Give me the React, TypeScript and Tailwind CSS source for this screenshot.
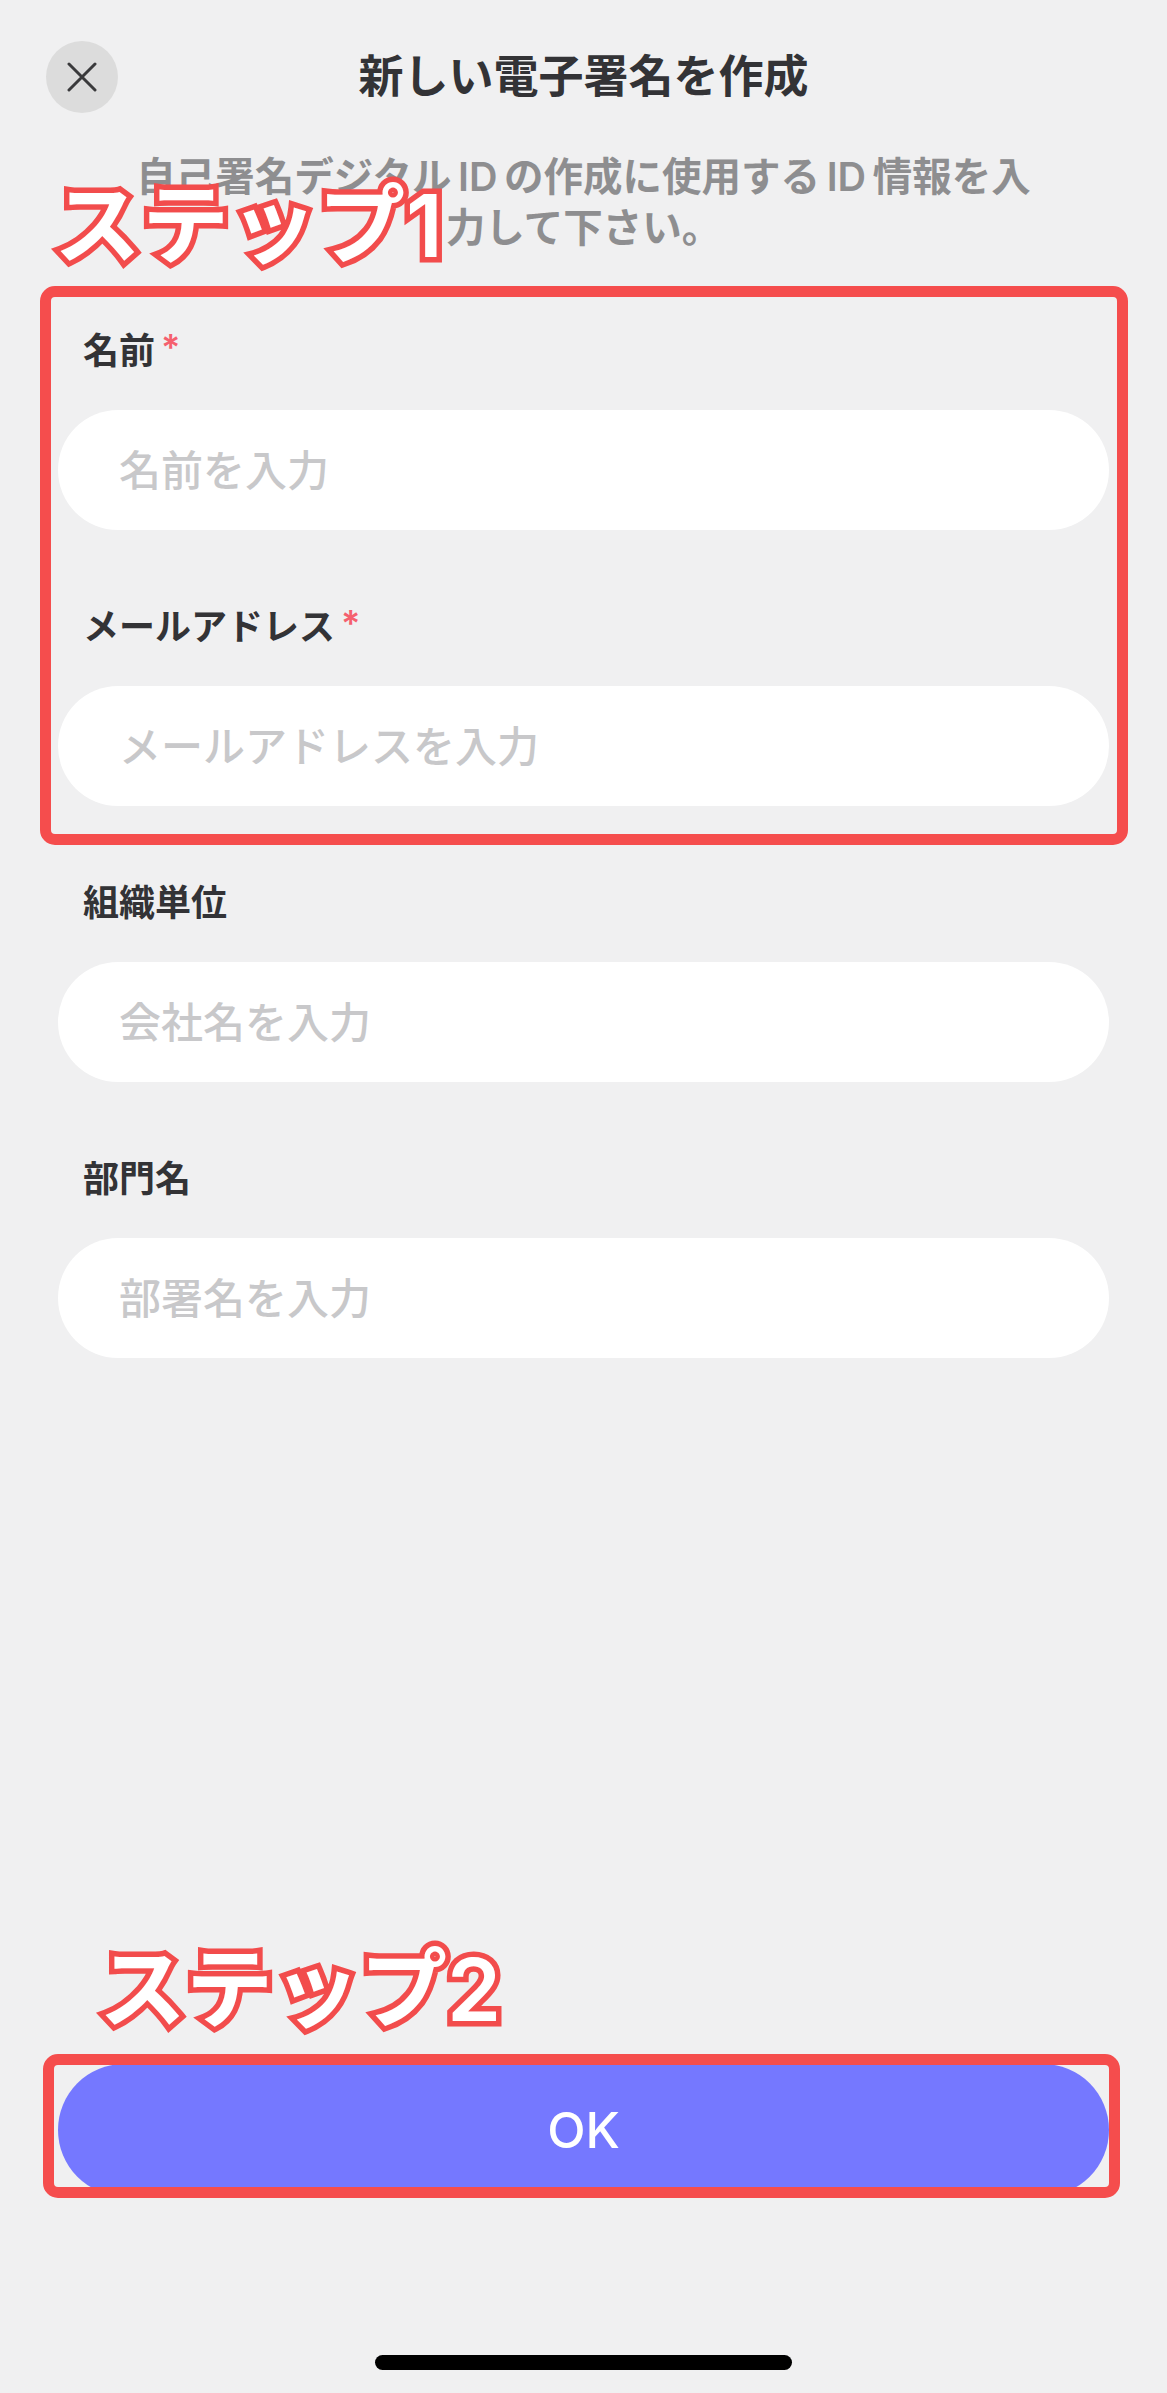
import React from "react";

const font = "[font-family:Inter,'Noto_Sans_CJK_JP',sans-serif]";

function Field({ label, placeholder, required }: { label: string; placeholder: string; required?: boolean }) {
  return (
    <div className="flex flex-col gap-[37px]">
      <div className="flex items-center h-[44px] px-[25px] text-[36px] leading-[44px] font-semibold text-[#333336]">
        <span>{label}</span>
        {required && <span className="ml-[6px] -mt-[8px] text-[36px] leading-[36px] font-semibold text-[#f5606e]">*</span>}
      </div>
      <div className="h-[120px] rounded-[60px] bg-white flex items-center pl-[61px] text-[42px] font-medium text-[#c8c8ca]">
        {placeholder}
      </div>
    </div>
  );
}

const stepClass =
  "absolute text-[87px] leading-[96px] font-semibold text-white whitespace-nowrap [-webkit-text-stroke:11px_#f24c4c] [paint-order:stroke_fill] [stroke-linejoin:round]";

export default function App() {
  return (
    <div className={`relative w-[1167px] h-[2393px] overflow-hidden bg-[#f0f0f1] flex flex-col ${font}`}>
      <header className="grid grid-cols-[72px_1fr_72px] items-center px-[46px] pt-[41px]">
        <button className="w-[72px] h-[72px] rounded-full bg-[#dcdcdc] flex items-center justify-center">
          <svg width="30" height="30" viewBox="0 0 30 30" fill="none">
            <path d="M2 2L28 28M28 2L2 28" stroke="#3a3a3c" strokeWidth="3" strokeLinecap="round" />
          </svg>
        </button>
        <h1 className="text-center text-[45px] leading-[72px] font-semibold text-[#333336]">新しい電子署名を作成</h1>
        <div />
      </header>

      <p className="mt-[39px] text-center text-[39.5px] leading-[51px] font-semibold text-[#8e8e90]">
        自己署名デジタル&#8201;ID&#8201;の作成に使用する&#8201;ID&#8201;情報を入
        <br />
        力して下さい。
      </p>

      <main className="mt-[75px] px-[58px] flex flex-col gap-[75px]">
        <Field label="名前" placeholder="名前を入力" required />
        <Field label="メールアドレス" placeholder="メールアドレスを入力" required />
        <Field label="組織単位" placeholder="会社名を入力" />
        <Field label="部門名" placeholder="部署名を入力" />
      </main>

      <div className="mt-auto px-[58px]">
        <button className="w-full h-[132px] rounded-[66px] bg-[#7578ff] text-white text-[50px] font-medium">OK</button>
      </div>

      <div className="mt-[159px] mb-[23px] mx-auto w-[417px] h-[15px] rounded-full bg-black" />

      <div className="absolute left-[40px] top-[286px] w-[1088px] h-[559px] rounded-[15px] border-[11px] border-[#f54d4d]" />
      <div className="absolute left-[43px] top-[2054px] w-[1077px] h-[144px] rounded-[15px] border-[11px] border-[#f54d4d]" />

      <div className={`${stepClass} tracking-[1px] left-[54px] top-[178px]`}>ステップ1</div>
      <div className={`${stepClass} left-[99px] top-[1942px]`}>ステップ2</div>
    </div>
  );
}
